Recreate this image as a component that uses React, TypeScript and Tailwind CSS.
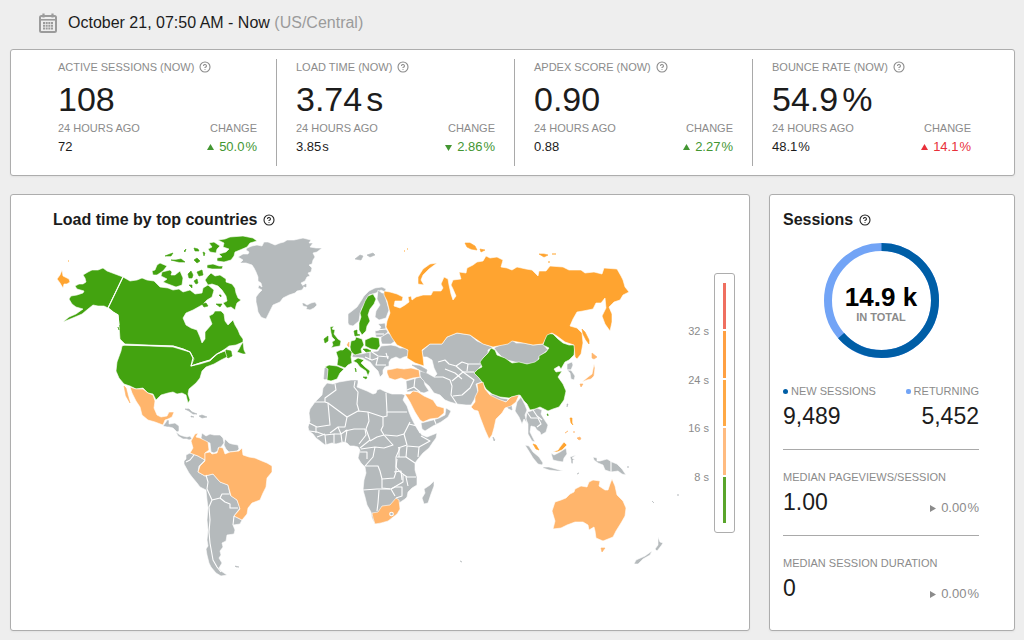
import { CircleQuestionMark } from "lucide-react";

const FAST = "#43a310";
const OK = "#ffb56c";
const SLOW = "#ffa430";
const NO_DATA = "#b5babc";

type Stat = {
  label: string;
  value: string;
  unit?: string;
  previous: string;
  change: string;
  arrow: "up" | "down";
  good: boolean;
};

const stats: Stat[] = [
  { label: "ACTIVE SESSIONS (NOW)", value: "108", previous: "72", change: "50.0", arrow: "up", good: true },
  { label: "LOAD TIME (NOW)", value: "3.74", unit: "s", previous: "3.85", change: "2.86", arrow: "down", good: true },
  { label: "APDEX SCORE (NOW)", value: "0.90", previous: "0.88", change: "2.27", arrow: "up", good: true },
  { label: "BOUNCE RATE (NOW)", value: "54.9", unit: "%", previous: "48.1", change: "14.1", arrow: "up", good: false },
];

const scale = [
  { color: "bg-[#ef6f60]", label: "32 s" },
  { color: "bg-[#ffa042]", label: "24 s" },
  { color: "bg-[#ffa945]", label: "16 s" },
  { color: "bg-[#ffbb80]", label: "8 s" },
  { color: "bg-[#5aa52b]", label: "" },
];

const medians = [
  { label: "MEDIAN PAGEVIEWS/SESSION", value: "1.00" },
  { label: "MEDIAN SESSION DURATION", value: "0" },
];

// Land shapes, grouped by the colour of their load time bucket
const land: { fill: string; shapes: string[] }[] = [
  {
    fill: NO_DATA,
    shapes: [
      // Greenland, Iceland, Svalbard
      "238,257 243,254 248,254 249,252 246,250 247,248 252,246 257,245 262,246 264,242 268,242 275,245 280,243 284,242 287,240 294,240 303,238 311,240 309,243 313,243 310,247 316,248 322,248 317,252 313,253 315,257 313,260 312,264 309,265 312,268 311,272 308,273 310,276 307,277 305,281 301,283 304,287 302,290 297,291 295,293 289,295 283,298 280,302 273,305 271,309 269,313 266,319 263,318 261,317 258,312 257,306 256,302 256,297 259,293 262,290 258,288 259,285 262,287 261,283 258,281 258,277 256,272 254,268 252,265 246,263 240,263 243,260",
      "302,303 304,303 307,305 311,303 315,302 317,305 314,308 310,310 306,309 307,307 303,306",
      "355,259 360,255 363,256 361,260", "367,255 373,253 375,255 370,257", "303,286 306,284 306,287",
      // Central America and the Caribbean
      "163,426 166,422 167,420 169,420 169,424 175,423 179,426 179,431 177,432 173,428 169,427 167,427",
      "176,432 180,435 183,436 187,437 190,436 192,439 189,440 187,439 183,439 178,436",
      "185,409 189,409 192,412 197,414 193,414 189,411", "199,416 202,415 207,417 202,418", "191,416 194,417 191,417",
      // Venezuela and the Guianas
      "202,433 206,436 210,434 214,435 220,435 223,438 224,443 221,447 218,448 218,451 214,453 211,452 210,443 203,441 201,438",
      "225,439 229,443 232,444 238,445 239,449 237,451 229,452 226,449 224,445",
      // Western and southern South America
      "190,453 198,456 205,460 199,466 198,472 205,476 213,474 220,482 228,485 230,495 237,500 240,508 234,516 242,520 240,524 233,525 235,530 234,534 227,535 226,541 222,543 223,547 220,551 221,555 219,558 222,563 219,568 221,571 227,575 221,576 216,573 211,567 209,563 207,555 206,549 208,546 207,540 208,530 207,520 208,508 207,500 206,490 200,487 197,483 192,477 189,473 184,464 184,461 186,459 186,455",
      "235,566 239,567 236,567",
      // Africa
      "327,383 333,384 339,382 345,381 351,380 358,380 358,383 357,387 362,389 367,391 373,394 376,393 377,390 380,389 386,392 392,394 402,394 405,395 403,400 407,406 409,412 411,417 415,425 418,430 422,435 427,437 437,433 436,438 433,442 429,448 423,453 418,459 415,463 415,470 417,477 417,485 412,488 408,492 407,497 405,499 399,503 400,509 397,514 388,521 381,523 375,524 372,518 371,512 367,505 365,497 363,490 364,480 366,473 365,467 361,463 358,458 360,450 358,447 354,446 350,446 347,443 343,442 336,444 332,443 325,445 320,441 316,438 313,434 309,431 308,427 310,421 309,413 310,409 315,402 322,395 323,388",
      "434,481 434,486 431,494 428,503 424,504 422,498 425,493 424,489 430,485",
      // Nordics and the Baltics
      "348,323 348,314 352,311 357,307 361,301 364,296 369,291 375,288 382,287 386,289 385,292 381,290 376,293 369,295 365,303 362,308 360,314 359,321 353,326 349,325",
      "378,290 382,293 385,293 386,299 389,310 386,318 379,320 375,317 376,311 380,305 377,299",
      "378,324 385,323 386,329 388,332 382,337 376,337 375,331 379,330 381,327",
      // Eastern Europe and the Balkans
      "381,337 388,333 393,336 395,341 391,344 382,344 381,341", "381,346 391,345 396,346 400,348 405,348 409,351 409,356 404,357 400,359 396,357 391,359 389,362 389,366 385,367 383,370 383,374 380,377 378,371 374,367 370,362 366,360 363,358 352,357 353,354 361,354 370,352 378,351",
      "325,368 328,368 327,379 324,379",
      // Central Asia down to Pakistan
      "422,351 430,344 442,344 447,337 457,333 470,335 477,341 484,344 493,347 488,350 488,353 483,358 481,366 474,373 480,379 482,382 476,384 478,392 474,400 471,405 466,405 457,404 450,402 445,400 440,395 434,393 429,386 423,381 420,376 420,371 427,373 434,377 437,374 434,368 432,360 427,357 423,357",
      // Caucasus, Iraq, the Levant
      "412,365 420,366 427,370 426,373 420,370", "406,381 420,377 424,381 425,385 429,391 424,393 415,391 407,392",
      // Yemen and Oman
      "421,423 433,420 439,418 445,415 446,408 451,411 448,417 441,422 433,426 425,431 422,429",
      // Mongolia, Korea
      "494,348 500,345 508,343 512,340 516,343 524,343 533,345 543,344 548,350 540,356 538,360 534,364 526,364 515,362 507,360 502,357 498,353",
      "567,364 572,362 573,365 571,370 575,376 574,380 571,379 570,373 567,370",
      // Nepal and Bangladesh
      "490,394 495,395 501,398 508,399 507,402 497,400 489,396", "506,403 511,404 512,410 508,408",
      // Indochina
      "517,402 521,397 525,405 527,410 525,415 527,423 524,419 522,424 519,417 515,411",
      "527,412 531,411 537,408 542,410 541,414 544,419 548,425 546,432 541,435 540,432 537,430 535,427 531,426 530,432 533,438 535,442 532,441 528,434 528,424 526,419",
      "493,437 495,440 494,441", "567,404 568,404 567,407",
      // Indonesia and New Guinea
      "525,445 529,446 533,452 539,457 543,463 542,465 538,464 533,458 530,453",
      "543,467 549,467 556,469 563,471 557,471 549,470 543,468",
      "551,453 554,455 560,452 566,448 567,454 564,458 563,462 557,461 553,460", "570,457 576,455 572,458 575,460 573,460 573,464 571,463 571,460",
      "593,457 597,458 597,461 600,461 607,459 612,462 617,464 622,469 626,475 622,474 618,471 611,472 605,470 603,465 598,463 594,460",
      // New Zealand and Pacific islands
      "658,537 660,542 663,543 661,546 657,551 655,549 658,545", "652,551 650,555 643,559 638,564 634,564 636,560 645,556",
      "652,501 654,503", "627,467 629,467", "677,495 679,495", "577,474 579,473", "460,561 462,562",
    ],
  },
  {
    fill: FAST,
    shapes: [
      // Alaska
      "83,275 88,272 92,270 98,270 103,268 107,271 115,274 123,277 108,308 104,306 98,306 93,305 88,309 82,314 75,317 63,322 69,317 76,314 83,309 76,307 72,304 69,299 71,296 77,295 83,293 84,291 77,289 75,286 79,284 83,284 86,282 85,278",
      // Canada
      "123,277 130,281 137,280 142,278 147,280 154,281 160,287 168,288 173,290 179,289 183,292 190,290 195,294 202,293 203,288 208,285 214,290 212,297 207,300 202,305 193,310 186,313 183,318 186,325 191,328 197,330 200,337 202,343 205,339 205,332 212,324 209,316 213,314 215,311 221,311 224,314 225,321 228,325 230,323 233,320 235,325 238,330 240,335 243,339 243,342 236,345 229,346 225,349 217,354 210,360 200,363 191,366 193,358 190,352 183,349 173,346 125,344 120,339 119,325 118,315 113,312 108,308",
      "239,349 241,345 243,342 244,350 246,354 243,354 237,352", "226,350 231,351 232,356 228,358 225,355",
      // Contiguous United States
      "125,345 173,347 183,350 190,352 194,359 191,366 200,364 210,361 217,354 225,351 227,357 221,360 214,364 206,367 202,371 200,378 196,383 189,389 188,394 190,400 188,403 186,395 182,393 177,394 173,392 168,393 161,395 156,400 153,394 148,393 143,388 136,389 130,386 124,384 119,378 116,371 117,362 121,351 122,346",
      // Canadian Arctic islands
      "218,240 225,239 230,237 243,236 253,238 257,241 250,243 247,247 240,250 235,252 234,256 231,260 224,262 217,261 217,258 222,257 219,254 226,252 229,249 223,247 224,243",
      "209,243 214,242 220,246 217,249 216,253 210,252 208,249 212,247", "207,265 213,264 219,266 223,266 222,269 212,269 207,268",
      "165,256 170,254 173,253 171,256", "171,260 176,260 181,259 185,262 179,262", "194,248 198,249 199,251 195,251",
      "203,252 205,253 204,256", "194,260 197,258 200,261 197,263", "184,251 186,249 185,252",
      "157,265 160,263 167,266 163,271 157,275 153,275 152,271 155,270", "162,272 170,270 172,272 171,275 175,275 180,271 183,278 182,285 176,287 168,284 163,282 167,279 161,276",
      "188,274 191,271 193,275 192,278 189,278", "197,272 202,270 203,275 199,276", "189,285 192,285 192,288", "194,281 197,279 198,283 196,284",
      "205,280 208,276 211,273 215,276 220,275 226,279 226,282 232,284 235,288 236,293 238,298 241,300 237,303 236,306 235,310 231,307 227,308 223,303 227,301 226,296 222,290 218,286 212,284 208,285",
      "202,304 206,303 208,306 204,307", "216,304 222,304 220,307", "219,295 221,295 221,297", "118,327 119,330",
      // Sweden and Denmark
      "368,296 373,294 376,299 374,304 370,309 368,315 370,321 367,326 366,331 362,335 359,330 359,323 361,317 360,313 363,306 365,301",
      "354,331 357,330 357,334 360,335 355,336",
      // UK and Ireland
      "330,327 334,326 332,329 335,330 334,334 338,339 341,341 340,346 334,347 331,348 333,345 332,342 335,340 332,337 331,333", "324,339 328,336 328,341 325,343",
      // Germany, Poland and Czechia
      "351,341 355,340 356,337 362,339 364,345 361,349 362,353 355,355 351,352 350,347",
      "365,340 372,337 379,338 380,346 377,350 371,349 367,347 365,346", "363,349 367,349 371,351 366,352",
      // France, Spain, Italy
      "336,352 340,350 343,350 346,347 352,352 351,357 352,363 348,365 345,368 337,365 338,358", "325,367 329,365 337,366 344,369 340,373 337,379 331,381 327,380 328,369",
      "353,361 358,358 364,360 361,363 365,367 370,371 368,376 366,371 360,367 357,363", "363,377 367,377 366,379", "355,368 356,369 356,372",
      // China
      "474,373 478,369 482,367 480,362 483,358 488,353 491,348 495,350 497,355 505,358 512,363 519,362 527,364 535,362 539,359 539,356 546,352 549,348 543,345 546,333 553,334 558,339 563,343 569,345 575,345 574,355 569,360 565,362 561,369 559,366 554,369 556,372 562,371 558,377 563,384 566,391 564,400 559,407 553,409 548,411 544,409 540,407 535,409 530,410 527,404 524,401 520,395 509,398 500,397 492,394 486,389 482,382 479,378", "547,414 548,414 548,416",
    ],
  },
  {
    fill: SLOW,
    shapes: [
      // Russia
      "384,291 390,292 397,294 403,297 402,301 395,301 394,306 400,308 405,305 409,302 408,297 411,296 412,300 416,297 423,295 431,295 433,291 441,291 443,288 441,284 444,277 448,279 449,285 451,294 453,300 456,296 453,289 451,285 453,280 461,279 459,272 466,273 467,268 473,265 477,262 483,261 486,256 490,258 497,257 503,260 501,267 507,268 512,270 517,267 526,269 532,270 538,276 539,271 546,271 550,266 563,267 569,270 581,270 585,273 594,272 602,274 604,268 617,269 621,276 623,280 625,287 629,292 623,295 620,300 614,302 609,307 612,314 612,322 610,331 605,324 602,316 606,308 605,298 601,303 596,303 593,309 583,311 577,312 573,319 570,326 577,328 582,333 583,343 581,354 577,359 575,357 574,345 565,342 557,336 552,333 547,335 543,344 533,345 523,343 512,341 508,344 493,347 483,344 470,335 457,333 447,337 442,344 430,344 422,350 423,357 424,366 415,363 407,358 408,350 397,345 392,338 386,327 387,321 390,313 387,301 384,295",
      "437,263 430,264 423,269 418,277 418,284 424,285 421,280 423,275 429,269", "465,243 470,243 475,246 477,250 471,249 467,247", "480,249 485,250 481,252",
      "539,254 544,254 548,255 544,257", "552,254 556,254", "582,329 585,332 589,340 589,344 586,340 583,334", "404,251 405,251", "407,249 408,249", "548,262 550,262",
      "62,270 63,276 69,279 70,282 67,284 64,284 63,288 60,283 57,279 60,275", "68,261 69,261",
      // Malaysia
      "533,444 536,445 539,450 536,449", "553,452 558,450 560,447 564,442 567,445 565,447 562,450 557,452",
      "570,418 572,418 572,423 573,425 571,423",
    ],
  },
  {
    fill: OK,
    shapes: [
      // Mexico
      "130,387 136,389 143,389 148,393 153,395 155,401 154,408 157,415 161,417 167,416 169,412 174,412 172,417 168,419 165,420 163,425 155,422 148,420 142,415 140,407 136,401 132,393",
      "124,386 126,388 128,396 130,403 126,396",
      // Colombia and Brazil
      "198,433 196,437 200,438 208,442 209,450 205,453 205,460 198,456 190,453 193,448 191,441 195,434",
      "205,453 210,452 212,454 217,453 219,447 223,448 225,454 230,452 239,451 242,448 243,455 249,457 255,458 262,461 267,463 272,466 272,472 267,478 266,487 263,493 260,500 252,503 248,508 247,514 242,520 234,516 240,509 237,500 231,496 228,485 220,482 213,474 205,476 198,472 200,466 205,461",
      // South Africa
      "372,513 378,512 382,506 390,505 396,498 399,500 400,509 397,514 388,521 381,523 375,524 373,518",
      // Low Countries, Turkey, Saudi Arabia
      "347,345 349,342 349,347", "387,370 393,369 397,368 404,369 411,368 419,370 420,377 413,378 406,380 401,378 395,380 389,378 387,373",
      "405,394 410,394 413,391 418,392 424,396 433,400 437,406 444,408 444,413 438,418 430,419 423,422 420,420 415,412 410,402",
      // India and Japan
      "477,384 483,382 485,389 490,395 498,399 506,402 511,397 519,395 516,402 511,406 505,408 502,413 496,419 494,428 492,435 489,439 485,430 480,417 478,411 474,410 471,407 475,402 475,397 478,391",
      "592,353 597,357 594,359 592,358", "594,364 595,368 594,376 591,379 587,380 582,382 588,377 592,374", "580,384 583,384 581,387",
      // Philippines
      "573,432 575,432", "577,438 580,437 581,439 579,440", "565,433 568,431",
      // Australia
      "555,502 561,500 566,498 570,494 574,492 575,489 581,486 587,487 589,482 593,480 600,481 599,486 605,490 608,490 610,484 612,479 615,486 617,495 623,501 626,508 625,516 621,523 616,531 613,537 608,539 603,541 596,538 595,531 594,527 589,530 588,525 583,522 575,522 567,525 561,528 553,529 555,521 552,511", "601,548 605,548 602,552",
    ],
  },
];

// Country borders inside the larger landmasses
const borders = [
  // South America
  "186,462 190,460 194,455", "206,475 208,482 207,489 212,500 209,507 210,520 209,532 210,543 213,560 217,567 221,572", "212,500 220,498 222,494 229,494", "220,498 225,502 230,504 230,508 238,508", "234,516 233,525",
  // Africa
  "335,384 336,390 325,398 325,402 315,402", "325,402 328,403 347,417 358,411 368,412 383,417", "355,381 354,387 358,392 357,404 359,411", "328,403 330,425 317,427 309,423",
  "347,417 345,427 338,427 330,433", "386,393 387,412 407,412", "387,412 387,416 383,417 383,426 381,430 384,435", "368,412 369,421 366,429 370,440 360,448", "345,431 354,429 365,429 366,435 359,444",
  "370,441 377,437 384,435 393,445 384,448 375,447 361,449", "385,435 397,436 404,434 407,445 398,448", "410,422 407,428 404,434", "409,424 417,426 420,433", "421,436 430,441 419,447 407,446", "419,447 418,457",
  "375,447 373,457 365,466 378,466 380,471 382,479 394,478 396,472 396,457 400,448", "397,457 406,457 415,463", "397,459 396,467 400,472 407,477 416,477", "382,479 382,488 391,489 403,482 403,475",
  "363,490 377,489 390,489", "379,490 378,503 377,511", "391,489 395,487 402,487 402,496 396,498", "391,489 395,496", "406,477 408,486", "399,447 399,457", "407,446 406,457", "360,452 367,452 367,459",
  "309,431 317,432 325,435 326,445", "325,435 334,434 334,443", "334,434 341,434 342,442", "341,434 347,430 345,443", "316,427 316,433", "317,437 325,434", "338,427 341,434", "394,472 401,471 402,480",
  // Europe
  "372,352 378,356 389,357", "365,357 372,360 378,358", "370,352 370,360", "378,357 376,365 386,365", "386,353 388,359", "376,330 386,329", "376,334 384,334",
  // Middle East and Central Asia
  "415,378 414,387 407,390", "414,387 420,392", "434,419 436,424", "434,377 443,377 450,380 452,386 451,395 457,404", "438,362 445,360 449,364 456,366 463,372 452,381", "456,366 462,362 468,364 480,364", "463,372 474,372",
  "463,372 474,380 470,388 462,395 453,396", "445,369 455,373 462,379", "468,364 467,371",
  // South East Asia and New Guinea
  "527,412 531,418 538,418 541,424 537,427", "533,410 537,416 542,420", "611,461 611,472", "567,370 572,370",
];

function HelpIcon({ dark = false }: { dark?: boolean }) {
  return (
    <button type="button" aria-label="Help" className={dark ? "text-[#222]" : "text-[#8b8b8b]"}>
      <CircleQuestionMark size={12} strokeWidth={2.2} />
    </button>
  );
}

function CalendarIcon() {
  return (
    <svg width="18" height="20" viewBox="0 0 18 20" fill="none" stroke="#9b9b9b" aria-hidden="true">
      <rect x="1" y="3" width="16" height="16" rx="1.5" strokeWidth="2" />
      <path d="M1 6.8h16" strokeWidth="1.6" />
      <path d="M4.5 0.5v4M13.5 0.5v4" strokeWidth="2.2" />
      <path d="M4 10h10M4 12.8h10M4 15.6h10" strokeWidth="2" strokeDasharray="2 0.67" />
    </svg>
  );
}

function Arrow({ dir }: { dir: "up" | "down" | "right" }) {
  const points = {
    up: "0,6 3.5,0 7,6",
    down: "0,1 7,1 3.5,7",
    right: "1,0 7,3.5 1,7",
  };
  return (
    <svg width="7" height="7" viewBox="0 0 7 7" fill="currentColor" aria-hidden="true">
      <polygon points={points[dir]} />
    </svg>
  );
}

function StatColumn({ stat }: { stat: Stat }) {
  return (
    <div className="flex-1 px-[19px] pb-2 border-r border-[#a9a9a9] last:border-r-0">
      <div className="flex items-center gap-[5px] text-[11px] leading-4 text-[#8b8b8b]">
        {stat.label}
        <HelpIcon />
      </div>
      <div className="mt-1 text-[34px] leading-[41px] text-[#1c1c1c]">
        {stat.value}
        {stat.unit && <span className="ml-1">{stat.unit}</span>}
      </div>
      <div className="flex justify-between text-[11px] leading-4 text-[#8b8b8b]">
        <span>24 HOURS AGO</span>
        <span>CHANGE</span>
      </div>
      <div className="flex justify-between text-[13px] leading-[22px] text-[#1c1c1c]">
        <span>
          {stat.previous}
          {stat.unit && <span className="ml-px">{stat.unit}</span>}
        </span>
        <span className={`flex items-center gap-[5px] ${stat.good ? "text-[#439632]" : "text-[#e8303a]"}`}>
          <Arrow dir={stat.arrow} />
          <span>
            {stat.change}
            <span className="ml-px">%</span>
          </span>
        </span>
      </div>
    </div>
  );
}

function WorldMap() {
  // Small islands take an outline of their own colour so that they stay visible
  const outline = (points: string, fill: string) => (points.split(" ").length < 7 ? fill : "#fff");

  return (
    <svg viewBox="50 230 635 352" className="flex-1 min-w-0 h-auto" role="img" aria-label="Load time by top countries">
      {land.map((group) => (
        <g key={group.fill} fill={group.fill} strokeWidth="0.6" strokeLinejoin="round">
          {group.shapes.map((points) => (
            <polygon key={points} points={points} stroke={outline(points, group.fill)} />
          ))}
        </g>
      ))}
      <g fill="none" stroke="#fff" strokeWidth="1.1" strokeLinejoin="round">
        {borders.map((points) => (
          <polyline key={points} points={points} />
        ))}
        <polyline points="123,277 108,308 113,312 118,315 119,325" />
        <polyline points="122,343 125,345 173,346 183,349 190,352 193,358 191,366 200,363 210,360 217,354 225,350" />
        <circle cx="391.5" cy="514" r="1.8" fill={NO_DATA} />
      </g>
    </svg>
  );
}

function MapLegend() {
  return (
    <div className="mt-[43px] flex items-start gap-[5px]">
      <div className="mt-[34px] flex h-[194px] w-6 flex-col text-right text-[11px] text-[#8b8b8b]">
        {scale.filter((s) => s.label).map((s) => (
          <span key={s.label} className="flex flex-1 items-center justify-end whitespace-nowrap">
            {s.label}
          </span>
        ))}
      </div>
      <div className="flex h-[260px] w-[21px] flex-col items-center gap-[2px] rounded-[3px] border border-[#adadad] py-[9px]">
        {scale.map((s) => (
          <div key={s.color} className={`w-[3px] flex-1 ${s.color}`} />
        ))}
      </div>
    </div>
  );
}

function SessionsDonut() {
  const r = 53.5;
  const length = 2 * Math.PI * r;
  const fresh = (9489 / 14941) * length;
  return (
    <div className="relative mx-auto mt-[13px] size-[115px]">
      <svg viewBox="0 0 115 115" className="size-full -rotate-90" fill="none" strokeWidth="8" aria-hidden="true">
        <circle cx="57.5" cy="57.5" r={r} stroke="#72a4f6" />
        <circle cx="57.5" cy="57.5" r={r} stroke="#005ea6" strokeDasharray={`${fresh} ${length}`} />
      </svg>
      <div className="absolute inset-0 flex flex-col items-center justify-center pt-2 font-bold">
        <span className="text-[26px] leading-6 text-black">14.9 k</span>
        <span className="text-[11px] leading-4 text-[#8b8b8b]">IN TOTAL</span>
      </div>
    </div>
  );
}

function SessionsCard() {
  return (
    <section className="w-[246px] shrink-0 rounded-[3px] border border-[#adadad] bg-white pt-[15px] pr-[35px] pb-1 pl-[13px] shadow-xs">
      <h2 className="flex items-center gap-[6px] text-[16px] leading-5 font-bold text-[#1c1c1c]">
        Sessions
        <HelpIcon dark />
      </h2>
      <SessionsDonut />
      <div className="mt-[25px] flex justify-between pb-4">
        <div>
          <div className="flex items-center gap-[3px] text-[11px] leading-4 text-[#8b8b8b]">
            <span className="size-[5px] rounded-full bg-[#005ea6]" />
            NEW SESSIONS
          </div>
          <div className="text-[23px] leading-[34px] text-[#1c1c1c]">9,489</div>
        </div>
        <div className="text-right">
          <div className="flex items-center gap-[3px] text-[11px] leading-4 text-[#8b8b8b]">
            <span className="size-[5px] rounded-xs bg-[#72a4f6]" />
            RETURNING
          </div>
          <div className="text-[23px] leading-[34px] text-[#1c1c1c]">5,452</div>
        </div>
      </div>
      {medians.map((m) => (
        <div key={m.label} className="border-t border-[#a9a9a9] pt-[19px] pb-4 last:pb-0">
          <div className="text-[11px] leading-4 text-[#8b8b8b]">{m.label}</div>
          <div className="flex items-end justify-between">
            <span className="text-[23px] leading-[34px] text-[#1c1c1c]">{m.value}</span>
            <span className="flex items-center gap-[5px] text-[13px] leading-[22px] text-[#8b8b8b]">
              <Arrow dir="right" />
              <span>
                0.00<span className="ml-px">%</span>
              </span>
            </span>
          </div>
        </div>
      ))}
    </section>
  );
}

export default function App() {
  return (
    <main className="flex min-h-screen flex-col bg-[#eeeeee] pr-[9px] pb-[9px] pl-[10px] font-['Liberation_Sans',Arial,sans-serif]">
      <header className="flex items-center gap-[11px] pt-[13px] pb-4 pl-[29px]">
        <CalendarIcon />
        <h1 className="text-[16px] leading-5 text-[#1c1c1c]">
          October 21, 07:50 AM - Now <span className="text-[#9b9b9b]">(US/Central)</span>
        </h1>
      </header>

      <section className="flex rounded-[3px] border border-[#adadad] bg-white py-[9px] pr-6 pl-7 shadow-xs">
        {stats.map((stat) => (
          <StatColumn key={stat.label} stat={stat} />
        ))}
      </section>

      <div className="mt-[18px] flex flex-1 gap-[19px]">
        <section className="min-w-0 flex-1 rounded-[3px] border border-[#adadad] bg-white pt-[15px] shadow-xs">
          <h2 className="flex items-center gap-[6px] pl-[42px] text-[16px] leading-5 font-bold text-[#1c1c1c]">
            Load time by top countries
            <HelpIcon dark />
          </h2>
          <div className="flex items-start pr-[14px] pl-[39px]">
            <WorldMap />
            <MapLegend />
          </div>
        </section>
        <SessionsCard />
      </div>
    </main>
  );
}
